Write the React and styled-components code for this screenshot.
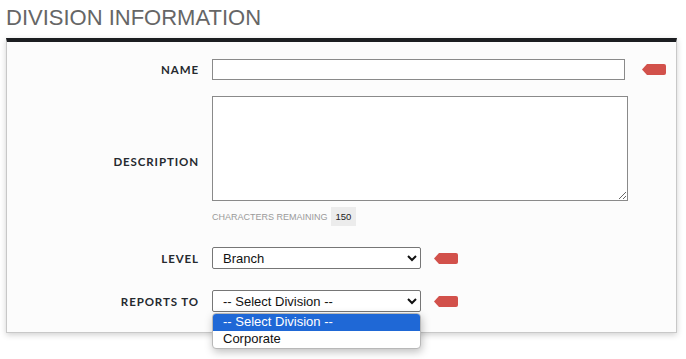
import styled, { createGlobalStyle } from 'styled-components';

const GlobalStyle = createGlobalStyle`
  html, body {
    margin: 0;
    padding: 0;
    background: #ffffff;
  }
  body {
    font-family: "Liberation Sans", Arial, sans-serif;
  }
`;

const Page = styled.div`
  padding: 6px 9px 26px 6px;
  min-height: 359px;
  box-sizing: border-box;
`;

const Title = styled.h1`
  margin: 0 0 8px;
  height: 24px;
  font-family: "Liberation Sans", Arial, sans-serif;
  font-weight: 400;
  font-size: 22px;
  line-height: 24px;
  color: #666666;
`;

const Panel = styled.div`
  background: #fcfcfc;
  border: 1px solid #c8c8c8;
  border-top: 4px solid #1c1e21;
  box-shadow: 0 2px 6px rgba(0, 0, 0, 0.18);
  padding: 17px 0 20px;
`;

const Row = styled.div`
  display: grid;
  grid-template-columns: 192px 1fr;
  column-gap: 13px;
  align-items: center;
  margin-bottom: ${p => p.gap || 0}px;
`;

const Label = styled.label`
  text-align: right;
  font-family: Lato, "Open Sans", sans-serif;
  font-weight: 700;
  font-size: 11.5px;
  letter-spacing: 0.9px;
  color: #262a2f;
  text-transform: uppercase;
`;

const Field = styled.div`
  display: flex;
  align-items: center;
  gap: ${p => p.gap || 13}px;
  position: relative;
`;

const TextInput = styled.input`
  box-sizing: border-box;
  width: 413px;
  height: 21px;
  margin: 0;
  border: 1px solid #8a8a8a;
  background: #ffffff;
  padding: 0 4px;
`;

const Stack = styled.div`
  display: flex;
  flex-direction: column;
  gap: 6px;
`;

const TextArea = styled.textarea`
  box-sizing: border-box;
  width: 416px;
  height: 105px;
  margin: 0;
  border: 1px solid #8a8a8a;
  background: #ffffff;
  resize: both;
  display: block;
`;

const Counter = styled.div`
  display: flex;
  align-items: center;
  gap: 3px;
  font-family: "Liberation Sans", Arial, sans-serif;
  font-size: 9px;
  color: #9a9a9a;
  text-transform: uppercase;
`;

const Badge = styled.span`
  background: #ececec;
  color: #222;
  padding: 4px 5px;
  font-size: 9.5px;
`;

const Select = styled.select`
  box-sizing: border-box;
  width: 209px;
  height: 22px;
  margin: 0;
  border: 1px solid #767676;
  border-radius: 2px;
  background: #ffffff;
  color: #111;
  font-family: "Liberation Sans", Arial, sans-serif;
  font-size: 13px;
  padding: 0 4px 0 6px;
`;

const Tag = styled.svg`
  width: 24px;
  height: 11px;
  flex: none;
`;

const ListBox = styled.ul`
  position: absolute;
  top: 23px;
  left: 0;
  width: 209px;
  box-sizing: border-box;
  margin: 0;
  padding: 0;
  list-style: none;
  background: #ffffff;
  border: 1px solid #b8b8b8;
  border-radius: 4px;
  box-shadow: 1px 3px 8px rgba(0, 0, 0, 0.25);
  overflow: hidden;
  z-index: 2;
`;

const Option = styled.li`
  height: 17px;
  line-height: 16px;
  padding: 0 10px;
  font-family: "Liberation Sans", Arial, sans-serif;
  font-size: 13px;
  color: ${p => (p.active ? '#ffffff' : '#111111')};
  background: ${p => (p.active ? '#1f68d6' : 'transparent')};
`;

const RequiredTag = () => (
  <Tag viewBox="0 0 24 11">
    <path d="M5 0 H22 Q24 0 24 2 V9 Q24 11 22 11 H5 L0 5.5 Z" fill="#d2514b" />
  </Tag>
);

export default function App() {
  return (
    <>
      <GlobalStyle />
      <Page>
        <Title>DIVISION INFORMATION</Title>
        <Panel>
          <Row gap={16}>
            <Label>Name</Label>
            <Field gap={17}>
              <TextInput type="text" />
              <RequiredTag />
            </Field>
          </Row>
          <Row gap={21}>
            <Label>Description</Label>
            <Stack>
              <TextArea />
              <Counter>
                Characters remaining <Badge>150</Badge>
              </Counter>
            </Stack>
          </Row>
          <Row gap={21}>
            <Label>Level</Label>
            <Field>
              <Select defaultValue="branch">
                <option value="">-- Select Division --</option>
                <option value="branch">Branch</option>
              </Select>
              <RequiredTag />
            </Field>
          </Row>
          <Row>
            <Label>Reports To</Label>
            <Field>
              <Select defaultValue="">
                <option value="">-- Select Division --</option>
                <option value="corporate">Corporate</option>
              </Select>
              <RequiredTag />
              <ListBox>
                <Option active>-- Select Division --</Option>
                <Option>Corporate</Option>
              </ListBox>
            </Field>
          </Row>
        </Panel>
      </Page>
    </>
  );
}
